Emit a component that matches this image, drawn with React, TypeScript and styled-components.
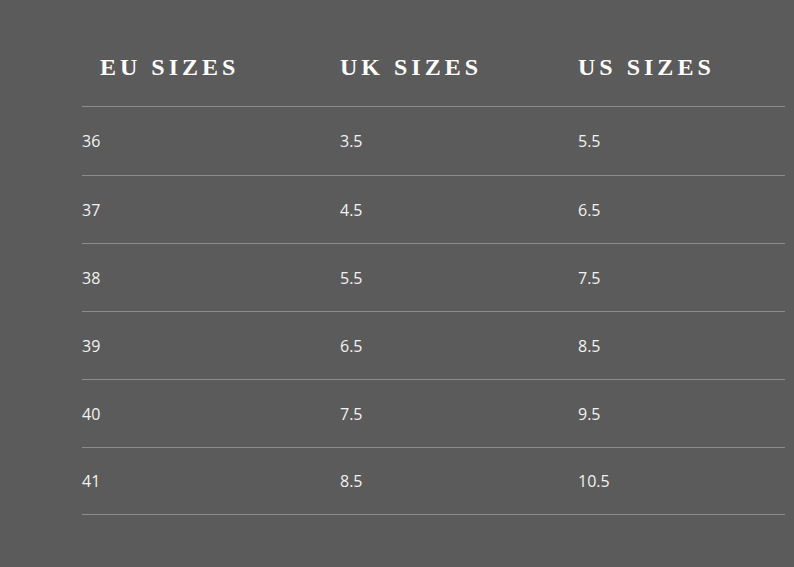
import React from "react";
import styled, { createGlobalStyle } from "styled-components";

const sizes = [
    { eu: "36", uk: "3.5", us: "5.5" },
    { eu: "37", uk: "4.5", us: "6.5" },
    { eu: "38", uk: "5.5", us: "7.5" },
    { eu: "39", uk: "6.5", us: "8.5" },
    { eu: "40", uk: "7.5", us: "9.5" },
    { eu: "41", uk: "8.5", us: "10.5" },
];

export default function App() {
    return (
        <>
            <GlobalStyle />
            <Page>
                <Chart>
                    <HeadRow>
                        <HeadCell $indent>EU Sizes</HeadCell>
                        <HeadCell>UK Sizes</HeadCell>
                        <HeadCell>US Sizes</HeadCell>
                    </HeadRow>
                    {sizes.map((s) => (
                        <Row key={s.eu}>
                            <Cell>{s.eu}</Cell>
                            <Cell>{s.uk}</Cell>
                            <Cell>{s.us}</Cell>
                        </Row>
                    ))}
                </Chart>
            </Page>
        </>
    );
}

const GlobalStyle = createGlobalStyle`
    html, body {
        margin: 0;
        padding: 0;
        background: #5b5b5b;
    }
`;

const Page = styled.div`
    width: 794px;
    height: 567px;
    background: #5b5b5b;
    padding-left: 82px;
    box-sizing: border-box;
    overflow: hidden;
`;

const Chart = styled.div`
    width: 703px;
    display: flex;
    flex-direction: column;
`;

const HeadRow = styled.div`
    display: grid;
    grid-template-columns: 258px 238px 1fr;
    height: 106px;
    box-sizing: border-box;
    padding-top: 53px;
`;

const HeadCell = styled.div<{ $indent?: boolean }>`
    padding-left: ${(p) => (p.$indent ? "18px" : "0")};
    font-family: "Liberation Serif", "Times New Roman", serif;
    font-weight: 700;
    font-size: 24px;
    line-height: 28px;
    letter-spacing: 4px;
    text-transform: uppercase;
    color: #ffffff;
`;

const Row = styled.div`
    display: grid;
    grid-template-columns: 258px 238px 1fr;
    align-items: center;
    height: 68px;
    box-sizing: border-box;
    border-top: 1px solid #8c8c8c;

    &:nth-child(2) {
        height: 69px;
    }

    &:last-child {
        border-bottom: 1px solid #8c8c8c;
    }
`;

const Cell = styled.div`
    font-family: "Open Sans", "Liberation Sans", sans-serif;
    font-size: 16px;
    color: #f2f2f2;
`;
